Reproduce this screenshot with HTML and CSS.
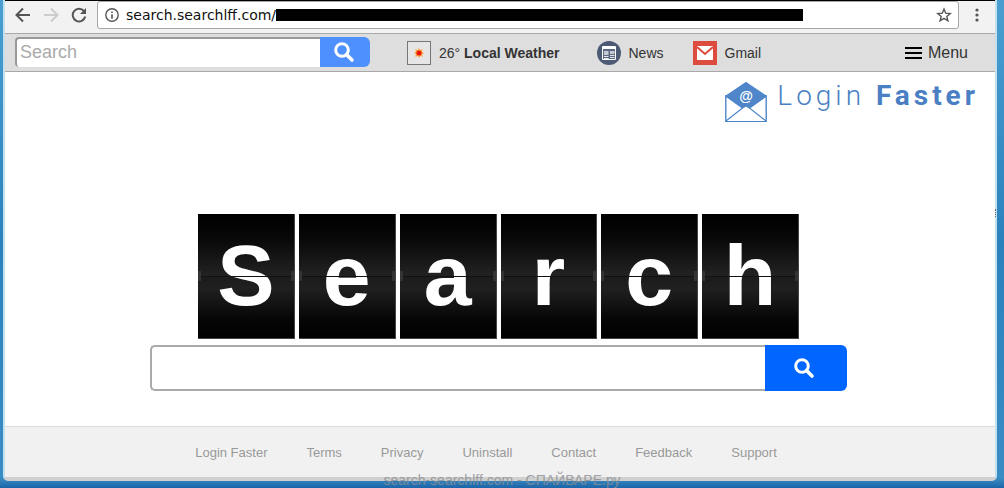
FILE: index.html
```html
<!DOCTYPE html>
<html lang="en">
<head>
    <meta charset="UTF-8">
    <meta name="viewport" content="width=device-width, initial-scale=1.0">
    <title>Login Faster</title>
    <link rel="stylesheet" href="styles.css">
</head>
<body>
    <div class="window">
        <div class="browser-bar">
            <button class="nav-btn" aria-label="Back">
                <svg width="16" height="16" viewBox="0 0 16 16" fill="none" stroke="#555" stroke-width="2"><path d="M15 8H2M8 1.5L1.5 8L8 14.5"/></svg>
            </button>
            <button class="nav-btn" aria-label="Forward" disabled>
                <svg width="16" height="16" viewBox="0 0 16 16" fill="none" stroke="#ccc" stroke-width="2"><path d="M1 8H14M8 1.5L14.5 8L8 14.5"/></svg>
            </button>
            <button class="nav-btn" aria-label="Reload">
                <svg width="16" height="16" viewBox="0 0 16 16"><path d="M13 4.2A6.3 6.3 0 1 0 14.2 9.5" fill="none" stroke="#555" stroke-width="2"/><path d="M15 1V7H9Z" fill="#555"/></svg>
            </button>
            <div class="address">
                <svg class="info" width="14" height="14" viewBox="0 0 14 14"><circle cx="7" cy="7" r="6.2" fill="none" stroke="#555" stroke-width="1.4"/><path d="M6.2 3.4H7.8V5H6.2ZM6.2 6.2H7.8V10.8H6.2Z" fill="#555"/></svg>
                <input class="url" type="text" value="search.searchlff.com/" aria-label="Address">
                <span class="redacted"></span>
                <button class="star" aria-label="Bookmark">
                    <svg width="16" height="16" viewBox="0 0 16 16"><path d="M8 2L9.7 6.2L14.2 6.5L10.8 9.4L11.9 13.8L8 11.4L4.1 13.8L5.2 9.4L1.8 6.5L6.3 6.2Z" fill="none" stroke="#555" stroke-width="1.4"/></svg>
                </button>
            </div>
            <button class="more" aria-label="More">
                <svg width="4" height="14" viewBox="0 0 4 14" fill="#555"><circle cx="2" cy="2" r="1.6"/><circle cx="2" cy="7" r="1.6"/><circle cx="2" cy="12" r="1.6"/></svg>
            </button>
        </div>

        <header class="toolbar">
            <form class="mini-search">
                <input type="text" placeholder="Search" aria-label="Search">
                <button type="button" aria-label="Search">
                    <svg width="22" height="22" viewBox="0 0 22 22" fill="none" stroke="#fff"><circle cx="9" cy="9" r="6.3" stroke-width="3"/><path d="M13.5 13.5L19 19" stroke-width="3.6" stroke-linecap="round"/></svg>
                </button>
            </form>
            <nav class="shortcuts">
                <a class="weather" href="#">
                    <svg width="24" height="24" viewBox="0 0 24 24"><rect x=".5" y=".5" width="23" height="23" fill="#e6e6e6" stroke="#777"/><path d="M12 7L13.2 9L15.8 8.2L15 10.8L17 12L15 13.2L15.8 15.8L13.2 15L12 17L10.8 15L8.2 15.8L9 13.2L7 12L9 10.8L8.2 8.2L10.8 9Z" fill="#fba33c"/><circle cx="12" cy="12" r="2.5" fill="#e81508"/></svg>
                    <span>26° <b>Local Weather</b></span>
                </a>
                <a class="news" href="#">
                    <svg width="24" height="24" viewBox="0 0 24 24"><circle cx="12" cy="12" r="12" fill="#4c5a73"/><path d="M5.5 5.5H18.5V18.5H5.5Z" fill="#5c6980" stroke="#fff"/><path d="M6 7H18" stroke="#fff" stroke-width="2"/><path d="M7 10H11.5V14H7ZM13 10H17.5V13H13Z" fill="#c5cad3"/><path d="M7 15.5H11.5M7 17.5H11.5M13 14.5H17.5M13 16.5H17.5" stroke="#e4e7ec"/></svg>
                    News
                </a>
                <a class="gmail" href="#">
                    <svg width="24" height="24" viewBox="0 0 24 24"><path d="M0 0H24V24H0Z" fill="#dd4b3e"/><path d="M4 5H20V19H4Z" fill="#fff"/><path d="M4 6L12 13L20 6" fill="none" stroke="#dd4b3e" stroke-width="2"/><path d="M6 5H18L12 10.5Z" fill="#fff"/></svg>
                    Gmail
                </a>
            </nav>
            <button class="menu">
                <svg width="17" height="12" viewBox="0 0 17 12" fill="#000"><path d="M0 0H17V2H0ZM0 5H17V7H0ZM0 10H17V12H0Z"/></svg>
                Menu
            </button>
        </header>

        <main>
            <a class="brand" href="#">
                <svg width="42" height="40" viewBox="0 0 42 40"><path d="M0 14L21 0L42 14L21 30Z" fill="#4f86c9"/><path d="M.8 14L21 28.5L41.2 14V39.2H.8Z" fill="#fff" stroke="#4f86c9" stroke-width="1.4"/><path d="M.8 14L21 0L41.2 14L24.5 26L21 24L17.5 26Z" fill="#4f86c9"/><path d="M1 39L17.5 26L21 24L24.5 26L41 39" fill="#fff" stroke="#4f86c9" stroke-width="1.2"/><text class="at" x="21" y="19" text-anchor="middle">@</text></svg>
                <span>Login <b>Faster</b></span>
            </a>

            <h1 class="tiles" aria-label="Search">
                <span class="tile">S</span>
                <span class="tile">e</span>
                <span class="tile">a</span>
                <span class="tile">r</span>
                <span class="tile">c</span>
                <span class="tile">h</span>
            </h1>

            <form class="main-search">
                <input type="text" aria-label="Search the web">
                <button type="button" aria-label="Search">
                    <svg width="22" height="22" viewBox="0 0 22 22" fill="none" stroke="#fff"><circle cx="9" cy="9" r="6.3" stroke-width="3"/><path d="M13.5 13.5L19 19" stroke-width="3.6" stroke-linecap="round"/></svg>
                </button>
            </form>
        </main>

        <footer>
            <a href="#">Login Faster</a>
            <a href="#">Terms</a>
            <a href="#">Privacy</a>
            <a href="#">Uninstall</a>
            <a href="#">Contact</a>
            <a href="#">Feedback</a>
            <a href="#">Support</a>
        </footer>
        <span class="grip"></span>
    </div>
    <div class="watermark">search-searchlff.com - СПАЙВАРЕ.ру</div>
</body>
</html>
```

FILE: styles.css
```css
* {
    box-sizing: border-box;
}

body {
    margin: 0;
    height: 100vh;
    padding: 0 7px 7px 3px;
    position: relative;
    overflow: hidden;
    font-family: "Liberation Sans", Arial, sans-serif;
    background: linear-gradient(#4a9fd0 0, #2a82bd 50%, #3a8cc4 98%, #1b64a8 100%);
}

button {
    border: 0;
    padding: 0;
    background: none;
    font-family: inherit;
    display: flex;
    align-items: center;
    justify-content: center;
}

input {
    border: 0;
    padding: 0;
    min-width: 0;
    font-family: inherit;
    outline: 0;
}

a {
    color: inherit;
    text-decoration: none;
}

svg {
    display: block;
    flex: none;
}

.window {
    position: relative;
    height: 100%;
    display: flex;
    flex-direction: column;
    background: #fff;
    border: 2px solid #c3e0ee;
    border-top: 0;
    border-bottom: 4px solid #d0d0ce;
    border-radius: 0 0 5px 5px;
}

/* browser chrome */
.browser-bar {
    display: flex;
    align-items: center;
    height: 34px;
    padding: 0 12px 4px 10px;
    gap: 12px;
    background: #f2f2f2;
    border-top: 1px solid #000;
    border-bottom: 1px solid #aaa;
}

.nav-btn {
    width: 16px;
}

.address {
    flex: 1;
    display: flex;
    align-items: center;
    height: 28px;
    margin-left: -2px;
    padding: 0 6px 0 7px;
    background: #fff;
    border: 1px solid #a6a6a6;
    border-radius: 3px;
}

.url {
    width: 150px;
    margin-left: 7px;
    font-family: "DejaVu Sans", sans-serif;
    font-size: 14px;
    color: #111;
}

.redacted {
    flex: 1;
    height: 12px;
    margin-right: 133px;
    background: #000;
}

.more {
    width: 12px;
}

/* toolbar */
.toolbar {
    display: flex;
    align-items: center;
    height: 38px;
    padding: 0 27px 0 10px;
    background: #dedede;
    border-bottom: 1px solid #a8a8a8;
    color: #333;
}

.mini-search {
    display: flex;
    width: 355px;
    height: 30px;
    margin-bottom: 2px;
}

.mini-search input {
    flex: 1;
    padding-left: 3px;
    font-size: 18px;
    background: #fff;
    border: solid #999;
    border-width: 2px 0 0 2px;
    border-radius: 4px 0 0 4px;
}

.mini-search input::placeholder {
    color: #aaa;
}

.mini-search button {
    width: 50px;
    padding-right: 2px;
    background: #4d90fe;
    border-radius: 0 6px 6px 0;
}

.shortcuts {
    display: flex;
    gap: 29px;
    margin-left: 37px;
    font-size: 14px;
}

.shortcuts a {
    display: flex;
    align-items: center;
    gap: 8px;
}

.weather {
    margin-right: 8px;
}

.menu {
    margin-left: auto;
    gap: 6px;
    font-size: 16px;
    color: #333;
}

/* page */
main {
    flex: 1;
    display: flex;
    flex-direction: column;
    align-items: center;
    padding-right: 3px;
}

.brand {
    align-self: flex-end;
    display: flex;
    gap: 10px;
    margin: 10px 13px 0 0;
    font-family: Roboto, sans-serif;
    font-size: 28px;
    font-weight: 300;
    line-height: 28px;
    letter-spacing: 4px;
    color: #4a7fc4;
}

.brand b {
    font-weight: 700;
}

.at {
    font: bold 14px "Liberation Sans", sans-serif;
    letter-spacing: 0;
    fill: #fff;
}

.tiles {
    display: grid;
    grid-template-columns: repeat(6, 1fr);
    gap: 4px;
    width: 601px;
    max-width: 100%;
    margin: 92px 0 6px;
}

.tile {
    position: relative;
    height: 125px;
    font-size: 86px;
    line-height: 122px;
    text-align: center;
    color: #fff;
    background: linear-gradient(#000, #080808 20%, #222 49%, #1c1c1c 52%, #202020 60%, #060606 85%, #000);
    border: 1px solid #444;
    border-width: 0 1px 1px 0;
}

.tile::before {
    content: "";
    position: absolute;
    left: 0;
    right: 0;
    top: 62px;
    height: 1px;
    background: #111;
}

.tile::after {
    content: "";
    position: absolute;
    left: 0;
    right: 0;
    top: 57px;
    height: 10px;
    border: solid #333;
    border-width: 0 3px;
}

.main-search {
    display: flex;
    width: 697px;
    max-width: 100%;
    height: 46px;
}

.main-search input {
    flex: 1;
    padding: 0 10px;
    font-size: 18px;
    background: #fff;
    border: 2px solid #aaa;
    border-right: 0;
    border-radius: 5px 0 0 5px;
}

.main-search button {
    width: 82px;
    padding-right: 4px;
    background: #0066ff;
    border-radius: 0 6px 6px 0;
}

footer {
    display: flex;
    align-items: center;
    justify-content: center;
    gap: 39px;
    height: 51px;
    padding-right: 28px;
    background: #f1f1f1;
    border-top: 1px solid #ddd;
    font-size: 13px;
    color: #999;
}

/* overlays */
.grip {
    position: absolute;
    right: -1px;
    top: 209px;
    height: 8px;
    border-right: 1px dotted #667;
}

.watermark {
    position: absolute;
    left: 0;
    right: 0;
    top: 472px;
    font-size: 14px;
    line-height: 17px;
    text-align: center;
    color: #8a8f94;
    opacity: .8;
}
```
